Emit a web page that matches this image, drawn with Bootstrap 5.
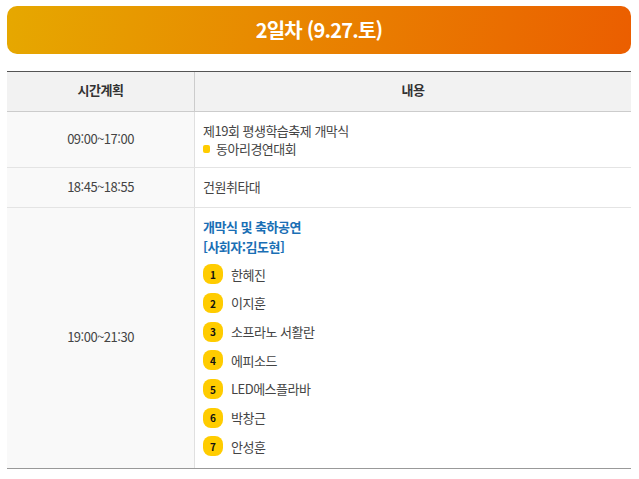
<!DOCTYPE html>
<html lang="ko">
<head>
<meta charset="utf-8">
<title>2일차</title>
<link href="https://cdn.jsdelivr.net/npm/bootstrap@5.3.0/dist/css/bootstrap.min.css" rel="stylesheet">
<style>
body { font-family: "Noto Sans CJK KR", "Noto Sans", sans-serif; background: #fff; color: #444; font-size: 13px; letter-spacing: -0.5px; }
.page-wrap { padding: 6px 8px 0 7px; }
.day-banner { height: 48px; border-radius: 10px; background: linear-gradient(100deg, #e6a800, #eb5e00); color: #fff; font-size: 20px; font-weight: 700; margin-bottom: 17px; letter-spacing: -0.8px; padding-bottom: 1px; }
.sched { table-layout: fixed; border-collapse: separate; border-spacing: 0; width: 100%; margin: 0; border-top: 1px solid #555; border-bottom: 1px solid #999; }
.sched th, .sched td { padding: 0; vertical-align: middle; font-weight: 400; box-shadow: none; color: #444; }
.sched th { background: #f2f2f2; height: 40px; text-align: center; font-weight: 700; color: #333; font-size: 13px; border-bottom: 1px solid #ccc; padding-bottom: 3px; }
.sched .tcol { width: 188px; text-align: center; background: #f9f9f9; border-right: 1px solid #e0e0e0; padding-bottom: 2px; }
.sched th.tcol { background: #f2f2f2; border-right: 1px solid #ccc; padding-bottom: 3px; }
.sched .trow td { border-bottom: 1px solid #e4e4e4; }
.sched .r1 { height: 56px; }
.sched .r2 { height: 40px; }
.sched .cbody { padding-left: 8px; background: #fff; line-height: 18px; }
.sched .r2 .cbody { padding-bottom: 2px; }
.blue-title { color: #1a6fb5; font-weight: 700; line-height: 20px; }
.sq-dot { width: 7px; height: 8px; border-radius: 2px; background: #fc0; margin-right: 6px; }
.num-list { margin: 3px 0 0; padding: 0; list-style: none; }
.num-list li { height: 28.7px; }
.num-badge { width: 20px; height: 20px; border-radius: 8px; background: #fc0; color: #111; font-size: 10px; font-weight: 700; margin-right: 8px; letter-spacing: 0; }
.r3-inner { padding: 9px 0 7px 8px; }
</style>
</head>
<body>
<div class="page-wrap">
  <div class="day-banner d-flex align-items-center justify-content-center">2일차 (9.27.토)</div>
  <table class="sched">
    <thead>
      <tr><th class="tcol">시간계획</th><th>내용</th></tr>
    </thead>
    <tbody>
      <tr class="trow r1">
        <td class="tcol">09:00~17:00</td>
        <td class="cbody">제19회 평생학습축제 개막식<div class="d-flex align-items-center"><span class="sq-dot"></span>동아리경연대회</div></td>
      </tr>
      <tr class="trow r2">
        <td class="tcol">18:45~18:55</td>
        <td class="cbody">건원취타대</td>
      </tr>
      <tr>
        <td class="tcol">19:00~21:30</td>
        <td>
          <div class="r3-inner">
            <div class="blue-title">개막식 및 축하공연<br>[사회자:김도현]</div>
            <ul class="num-list">
              <li class="d-flex align-items-center"><span class="num-badge d-flex align-items-center justify-content-center">1</span>한혜진</li>
              <li class="d-flex align-items-center"><span class="num-badge d-flex align-items-center justify-content-center">2</span>이지훈</li>
              <li class="d-flex align-items-center"><span class="num-badge d-flex align-items-center justify-content-center">3</span>소프라노 서활란</li>
              <li class="d-flex align-items-center"><span class="num-badge d-flex align-items-center justify-content-center">4</span>에피소드</li>
              <li class="d-flex align-items-center"><span class="num-badge d-flex align-items-center justify-content-center">5</span>LED에스플라바</li>
              <li class="d-flex align-items-center"><span class="num-badge d-flex align-items-center justify-content-center">6</span>박창근</li>
              <li class="d-flex align-items-center"><span class="num-badge d-flex align-items-center justify-content-center">7</span>안성훈</li>
            </ul>
          </div>
        </td>
      </tr>
    </tbody>
  </table>
</div>
<script src="https://cdn.jsdelivr.net/npm/bootstrap@5.3.0/dist/js/bootstrap.bundle.min.js"></script>
</body>
</html>
